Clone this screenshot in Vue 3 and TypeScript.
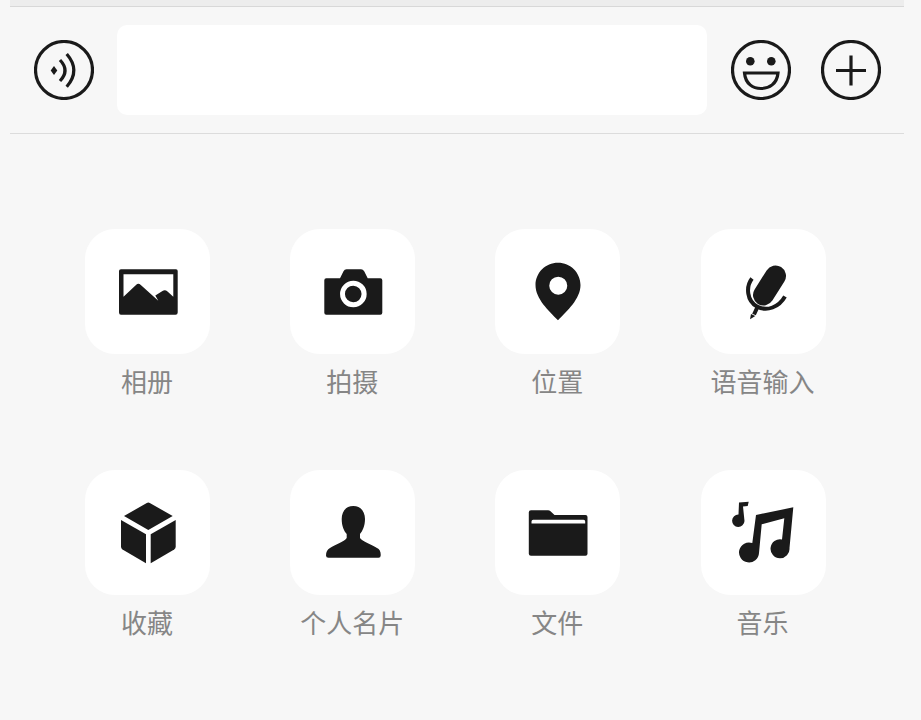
<script setup lang="ts">
interface Shape {
  d: string
  rule?: 'evenodd'
  stroke?: number
}

interface Item {
  label: string
  shapes: Shape[]
}

// icon coordinates use the whole 125x125 tile
const items: Item[] = [
  {
    label: '相册',
    shapes: [
      {
        d: 'M36 40.3 H91 Q92.7 40.3 92.7 42 V83.5 Q92.7 85.7 90.5 85.7 H36 Q34 85.7 34 83.5 V42 Q34 40.3 36 40.3 Z M38.5 45.3 V67.7 L51 56 Q53.3 53.6 55.8 56 L73.3 71.7 L70.3 66.6 L77.5 62 Q80 60.500 82.500 62.500 L88.3 67.700 V45.3 Z',
        rule: 'evenodd',
      },
    ],
  },
  {
    label: '拍摄',
    shapes: [
      {
        d: 'M50 49.3 L53.5 42.3 Q54.5 40.3 56.5 40.3 H71 Q73 40.3 74.2 42.3 L77.7 49.3 H90.3 Q92.3 49.3 92.3 51.3 V83.7 Q92.3 85.7 90.3 85.7 H36.3 Q34.3 85.7 34.3 83.7 V51.3 Q34.3 49.3 36.3 49.3 Z M63.3 51.7 A13.3 13.3 0 1 0 63.4 78.3 A13.3 13.3 0 1 0 63.3 51.7 Z M63.3 56.7 A8.3 8.3 0 1 1 63.2 73.3 A8.3 8.3 0 1 1 63.3 56.7 Z',
        rule: 'evenodd',
      },
    ],
  },
  {
    label: '位置',
    shapes: [
      {
        d: 'M63 33.7 C75.5 33.7 85.5 43.7 85.5 56 C85.5 70 72 82 63 91.3 C54 82 40.5 70 40.5 56 C40.5 43.7 50.5 33.7 63 33.7 Z M63.2 47.7 A9 9 0 1 0 63.3 65.7 A9 9 0 1 0 63.2 47.7 Z',
        rule: 'evenodd',
      },
    ],
  },
  {
    label: '语音输入',
    shapes: [
      { d: 'M74.5 47 L62.5 66', stroke: 21 },
      { d: 'M51 49.5 C44.5 58 46 72 56 77.500 C66 83 78 78 84 67.500', stroke: 4 },
      { d: 'M56.500 78 L53 85.5', stroke: 4 },
      { d: 'M50 85 L54.3 87 L49 90.3 Z' },
    ],
  },
  {
    label: '收藏',
    shapes: [
      { d: 'M61.800 33 Q63.300 32 64.800 33 L87.700 46 L63.300 60 L39 46 Z' },
      { d: 'M36 50 L61 64.300 V93.300 L37.500 79.500 Q36 78.500 36 76.700 Z' },
      { d: 'M90.700 50 L65.700 64.300 V93.300 L89.200 79.500 Q90.700 78.500 90.700 76.700 Z' },
    ],
  },
  {
    label: '个人名片',
    shapes: [
      {
        d: 'M63.300 36 C71 36 75 42 75 49 C75 56 72.500 61 70 64 V68 C72 71 82 75 87 78 Q91 80 90.700 85.500 Q90.700 87.700 88.500 87.700 H38.500 Q36 87.700 36 85.500 Q36 80 40 78 C45 75 55 71 56.700 68 V64 C54 61 51.700 56 51.700 49 C51.700 42 55.500 36 63.300 36 Z',
      },
    ],
  },
  {
    label: '文件',
    shapes: [
      {
        d: 'M36 40.300 H53 Q54.500 40.300 55.500 41.300 L59.500 45 H90.500 Q92.500 45 92.500 47 V83.700 Q92.500 85.700 90.500 85.700 H36 Q33.800 85.700 33.800 83.700 V42.300 Q33.800 40.300 36 40.300 Z M36.500 53.500 H90.200 V51.500 Q90.200 49.800 88.500 49.800 H38.200 Q36.500 49.800 36.500 51.500 Z',
        rule: 'evenodd',
      },
    ],
  },
  {
    label: '音乐',
    shapes: [
      { d: 'M38 32.500 L47.700 31.700 L46.700 36 L42 36.500 L43.500 51 A6.200 6.200 0 1 1 37.500 44.500 Z' },
      { d: 'M55 45 L92.300 37.300 L88.500 78 A9.500 9.500 0 1 1 81 69.500 L83.300 48.300 L60.700 54.300 L58 83 A10 10 0 1 1 51.300 73 Z' },
    ],
  },
]
</script>

<template>
  <div class="panel">
    <div class="top-strip"></div>
    <div class="input-bar">
      <svg class="round-icon" viewBox="0 0 60 60">
        <circle cx="30" cy="30" r="28.500" class="line" />
        <path d="M16.700 30.500 L20 26 L23.300 30.500 L20 35 Z" class="solid" />
        <path d="M26 20 Q36 30.500 26 41" class="line" />
        <path d="M32.700 14 Q47 30.500 32.700 46.700" class="line" />
      </svg>
      <div class="text-box"></div>
      <svg class="round-icon" viewBox="0 0 60 60">
        <circle cx="30" cy="30" r="28.500" class="line" />
        <circle cx="19.300" cy="21.300" r="4.300" class="solid" />
        <circle cx="40.300" cy="21.300" r="4.300" class="solid" />
        <path d="M13.500 33 H47 C46 44 38 48.500 30 48.500 C22 48.500 14.500 44 13.500 33 Z" class="line" />
      </svg>
      <svg class="round-icon plus" viewBox="0 0 60 60">
        <circle cx="30" cy="30" r="28.500" class="line" />
        <path d="M30 15.500 V45.500 M15 30.500 H45" class="line" />
      </svg>
    </div>
    <div class="grid">
      <div v-for="item in items" :key="item.label" class="cell">
        <div class="tile">
          <svg class="tile-icon" viewBox="0 0 125 125">
            <path
              v-for="s in item.shapes"
              :key="s.d"
              :d="s.d"
              :fill-rule="s.rule"
              :fill="s.stroke ? 'none' : '#1a1a1a'"
              :stroke="s.stroke ? '#1a1a1a' : 'none'"
              :stroke-width="s.stroke"
              :stroke-linecap="s.stroke && s.stroke > 10 ? 'round' : 'butt'"
            />
          </svg>
        </div>
        <span class="label">{{ item.label }}</span>
      </div>
    </div>
  </div>
</template>

<style scoped>
.panel {
  width: 921px;
  height: 720px;
  background: #f7f7f7;
  overflow: hidden;
  font-family: "Noto Sans CJK SC", "Liberation Sans", sans-serif;
}
.top-strip {
  height: 6px;
  margin: 0 17px 0 10px;
  background: #ededed;
  border-bottom: 1px solid #d8d8d8;
}
.input-bar {
  height: 127px;
  margin: 0 17px 0 10px;
  padding: 0 24px;
  box-sizing: border-box;
  border-bottom: 1px solid #dcdcdc;
  display: flex;
  align-items: center;
}
.round-icon {
  width: 60px;
  height: 60px;
  flex: none;
}
.solid {
  fill: #1a1a1a;
}
.line {
  fill: none;
  stroke: #1a1a1a;
  stroke-width: 3.200;
}
.text-box {
  width: 590px;
  height: 90px;
  margin: 0 24px 0 23px;
  flex: none;
  background: #fff;
  border-radius: 10px;
}
.plus {
  margin-left: 30px;
}
.grid {
  display: grid;
  grid-template-columns: repeat(4, 125px);
  column-gap: 80.200px;
  row-gap: 70px;
  padding: 95px 0 0 85px;
}
.cell {
  display: flex;
  flex-direction: column;
  align-items: center;
}
.tile {
  width: 125px;
  height: 125px;
  background: #fff;
  border-radius: 30px;
}
.tile-icon {
  display: block;
  width: 125px;
  height: 125px;
}
.label {
  margin-top: 8px;
  padding-right: 1px;
  font-size: 26px;
  line-height: 38px;
  color: #868686;
  white-space: nowrap;
}
</style>
